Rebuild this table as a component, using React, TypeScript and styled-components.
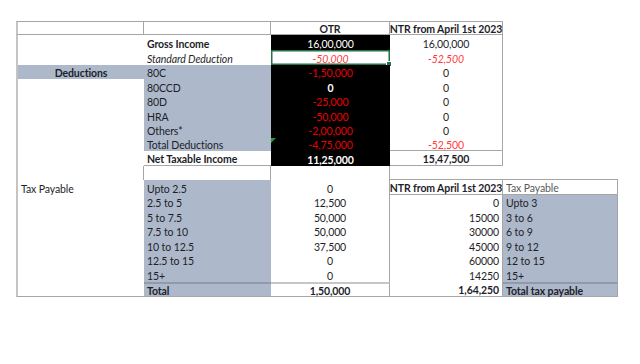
import React from 'react';
import styled, { createGlobalStyle, css } from 'styled-components';

const GlobalStyle = createGlobalStyle`
  html, body {
    margin: 0;
    padding: 0;
    background: #ffffff;
  }
  body {
    font-family: Lato, "Liberation Sans", sans-serif;
  }
`;

const Page = styled.div`
  width: 640px;
  height: 364px;
  padding: 21px 0 0 16px;
  box-sizing: border-box;
  background: #ffffff;
`;

const Sheet = styled.div`
  display: grid;
  grid-template-columns: 128px 127px 119px 113px 115px;
  grid-template-rows:
    14px 15px 15px 14px 15px 14px 15px 14px 14px 15px
    14px 15px 14px 15px 14px 15px 14px 15px 15px;
  width: max-content;
  font-size: 10.5px;
  letter-spacing: -0.1px;
  color: #1e1e2a;
`;

type Fill = 'none' | 'grey' | 'black';
type Align = 'left' | 'center' | 'right';
type Tone = 'ink' | 'white' | 'red' | 'pink' | 'muted';

const tones: Record<Tone, string> = {
  ink: '#1e1e2a',
  white: '#ffffff',
  red: '#e80000',
  pink: '#ff3c3c',
  muted: '#5a5a5a',
};

const fills: Record<Fill, string> = {
  none: 'transparent',
  grey: '#adb9ca',
  black: '#000000',
};

const line = '1px solid #a6a6a6';

const Cell = styled.div<{
  $fill?: Fill;
  $align?: Align;
  $bold?: boolean;
  $italic?: boolean;
  $tone?: Tone;
  $t?: boolean;
  $r?: boolean;
  $b?: boolean;
  $l?: boolean;
  $sep?: 'dark' | 'light';
}>`
  position: relative;
  box-sizing: border-box;
  display: flex;
  align-items: center;
  padding: 2px 3px 0 3px;
  white-space: nowrap;
  overflow: visible;
  background: ${(p) => fills[p.$fill || 'none']};
  color: ${(p) => tones[p.$tone || 'ink']};
  font-weight: ${(p) => (p.$bold ? 700 : 400)};
  font-style: ${(p) => (p.$italic ? 'italic' : 'normal')};
  justify-content: ${(p) =>
    p.$align === 'center' ? 'center' : p.$align === 'right' ? 'flex-end' : 'flex-start'};
  border-top: ${(p) => (p.$t ? line : 'none')};
  border-right: ${(p) => (p.$r ? line : 'none')};
  border-bottom: ${(p) => (p.$b ? line : 'none')};
  border-left: ${(p) => (p.$l ? '2px solid #c4c4c4' : 'none')};
  ${(p) =>
    p.$sep &&
    css`
      border-top: 2px solid ${p.$sep === 'dark' ? '#8f9bac' : '#c6c6c6'};
    `}
`;

const Selected = styled(Cell)`
  box-shadow: inset 0 0 0 1.5px #217346;

  &::after {
    content: '';
    position: absolute;
    right: -2px;
    bottom: -2px;
    width: 4px;
    height: 4px;
    background: #217346;
    border: 1px solid #ffffff;
  }
`;

const Flagged = styled(Cell)`
  &::before {
    content: '';
    position: absolute;
    left: 0;
    top: 1px;
    border-top: 5px solid #1f9a3a;
    border-right: 5px solid transparent;
  }
`;

const deductions: [string, string, Tone][] = [
  ['80C', '-1,50,000', 'red'],
  ['80CCD', '0', 'white'],
  ['80D', '-25,000', 'red'],
  ['HRA', '-50,000', 'red'],
  ['Others*', '-2,00,000', 'red'],
];

const slabs: [string, string, string, string][] = [
  ['2.5 to 5', '12,500', '0', 'Upto 3'],
  ['5 to 7.5', '50,000', '15000', '3 to 6'],
  ['7.5 to 10', '50,000', '30000', '6 to 9'],
  ['10 to 12.5', '37,500', '45000', '9 to 12'],
  ['12.5 to 15', '0', '60000', '12 to 15'],
  ['15+', '0', '14250', '15+'],
];

const App: React.FC = () => {
  return (
    <Page>
      <GlobalStyle />
      <Sheet>
        {/* header */}
        <Cell $l $t $r $b />
        <Cell $t $r $b />
        <Cell $t $r $b $bold $align="center">OTR</Cell>
        <Cell $t $r $b $bold $align="center">NTR from April 1st 2023</Cell>
        <Cell />

        <Cell $l />
        <Cell $bold>Gross Income</Cell>
        <Cell $fill="black" $tone="white" $align="center">16,00,000</Cell>
        <Cell $r $align="center">16,00,000</Cell>
        <Cell />

        <Cell $l />
        <Cell $italic>Standard Deduction</Cell>
        <Selected $italic $tone="pink" $align="center">-50,000</Selected>
        <Cell $r $italic $tone="pink" $align="center">-52,500</Cell>
        <Cell />

        {deductions.map(([label, value, tone], i) => (
          <React.Fragment key={label}>
            {i === 0 ? (
              <Cell $l $fill="grey" $bold $align="center">Deductions</Cell>
            ) : (
              <Cell $l />
            )}
            <Cell $fill="grey">{label}</Cell>
            <Cell $fill="black" $tone={tone} $bold={tone === 'white'} $align="center">
              {value}
            </Cell>
            <Cell $r $align="center">0</Cell>
            <Cell />
          </React.Fragment>
        ))}

        <Cell $l />
        <Cell $fill="grey">Total Deductions</Cell>
        <Flagged $fill="black" $tone="red" $align="center">-4,75,000</Flagged>
        <Cell $r $b $tone="pink" $align="center">-52,500</Cell>
        <Cell />

        <Cell $l />
        <Cell $b $bold>Net Taxable Income</Cell>
        <Cell $fill="black" $tone="white" $bold $align="center">11,25,000</Cell>
        <Cell $r $b $bold $align="center">15,47,500</Cell>
        <Cell />

        {/* spacer row */}
        <Cell $l $r />
        <Cell $r />
        <Cell $r />
        <Cell $b />
        <Cell $b />

        {/* tax payable */}
        <Cell $l>Tax Payable</Cell>
        <Cell $fill="grey">Upto 2.5</Cell>
        <Cell $r $align="center">0</Cell>
        <Cell $r $b $bold $align="center">NTR from April 1st 2023</Cell>
        <Cell $r $b $tone="muted">Tax Payable</Cell>

        {slabs.map(([range, otr, ntr, band]) => (
          <React.Fragment key={range}>
            <Cell $l />
            <Cell $fill="grey">{range}</Cell>
            <Cell $r $align="center">{otr}</Cell>
            <Cell $r $align="right">{ntr}</Cell>
            <Cell $r $fill="grey">{band}</Cell>
          </React.Fragment>
        ))}

        <Cell $l $b />
        <Cell $b $fill="grey" $bold $sep="dark">Total</Cell>
        <Cell $r $b $bold $align="center" $sep="light">1,50,000</Cell>
        <Cell $r $b $bold $align="right">1,64,250</Cell>
        <Cell $r $b $fill="grey" $bold $sep="dark">Total tax payable</Cell>
      </Sheet>
    </Page>
  );
};

export default App;
